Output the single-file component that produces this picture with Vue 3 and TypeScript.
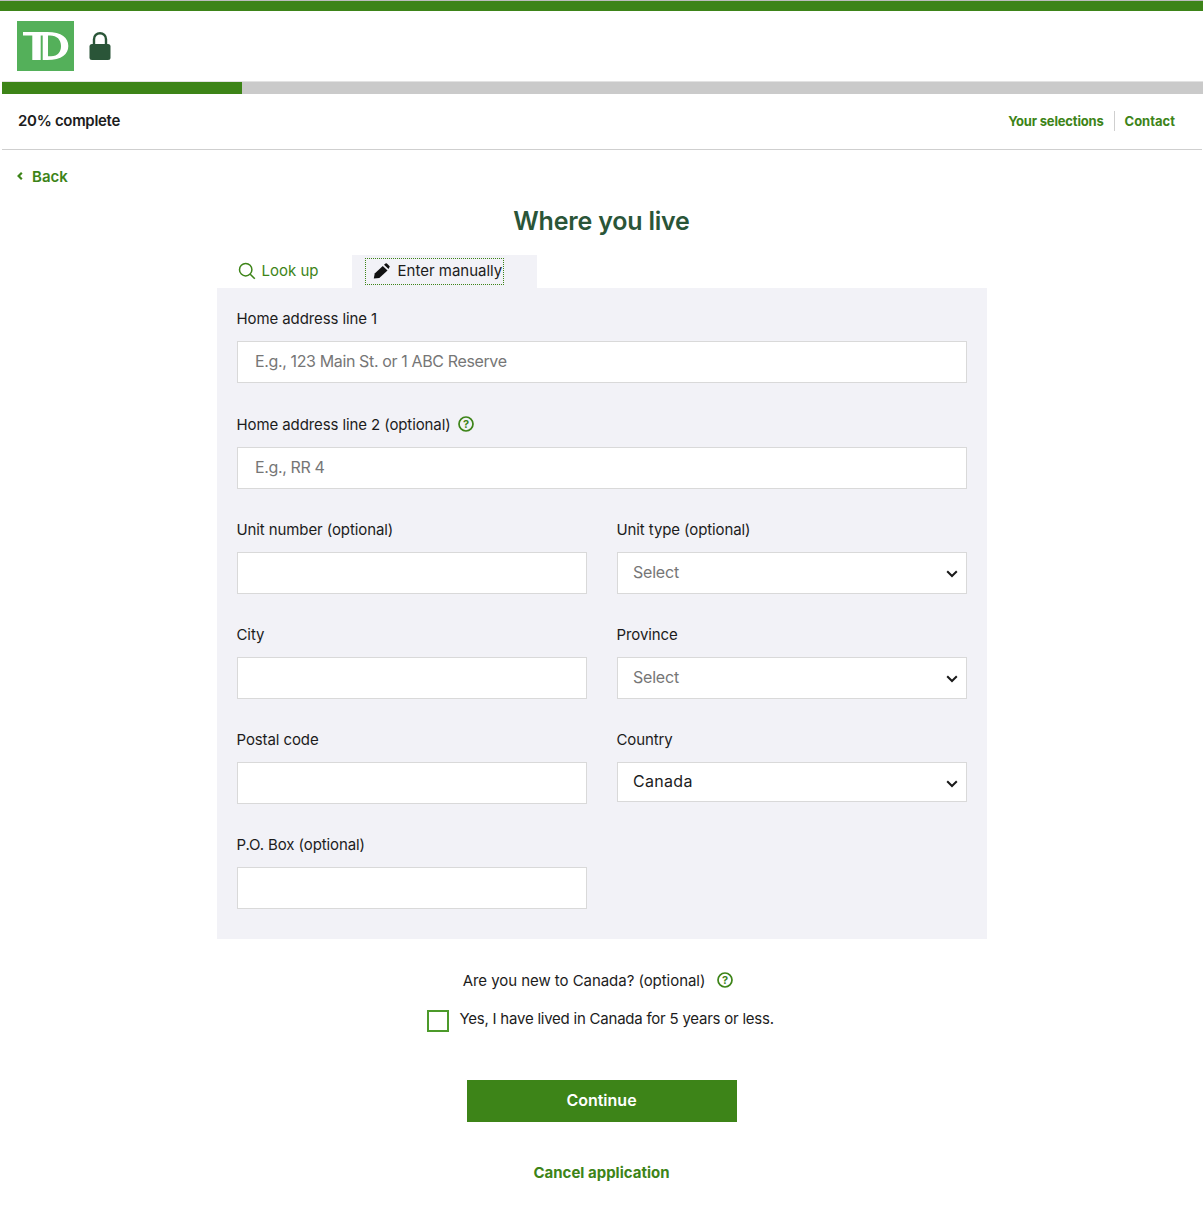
<script setup lang="ts">
const sideOptions = ['Select']
</script>

<template>
  <div class="page">
    <div class="top-bar"></div>
    <header class="brand">
      <svg class="logo" viewBox="0 0 57 50" width="57" height="50">
        <rect width="57" height="50" fill="#54b05a" />
        <path
          fill="#fff"
          fill-rule="evenodd"
          d="M6 11H30C45 11 51.300 17 51.300 25C51.300 33 45 39 30 39H25.700V14.400H23.700V39H15.300V14.400H6ZM31 14.400V35.200H34C41 35.200 44 31 44 25C44 18.500 40 14.400 33 14.400Z"
        />
      </svg>
      <svg class="lock" viewBox="0 0 22 28" width="22" height="28">
        <path d="M5 13V7.200a6 6 0 0 1 12 0V13" fill="none" stroke="#2a5538" stroke-width="2.400" />
        <rect x="0.500" y="12" width="21" height="16" rx="2.500" fill="#2a5538" />
      </svg>
    </header>

    <div class="progress">
      <div class="progress-fill"></div>
    </div>

    <div class="status">
      <span class="complete">20% complete</span>
      <nav class="links">
        <a class="link-sel">Your selections</a>
        <a class="link-contact">Contact</a>
      </nav>
    </div>

    <a class="back">
      <svg viewBox="0 0 6 8" width="6" height="8">
        <path d="M4.800 .8 1.600 4l3.200 3.200" fill="none" stroke="#3d8418" stroke-width="2.200" />
      </svg>
      Back
    </a>

    <h1 class="title">Where you live</h1>

    <main class="content">
      <div class="tabs">
        <div class="tab">
          <svg viewBox="0 0 18 18" width="18" height="18">
            <circle cx="7.700" cy="7.700" r="6.200" fill="none" stroke="#3d8418" stroke-width="1.500" />
            <path d="m12.200 12.200 4.600 4.600" stroke="#3d8418" stroke-width="1.600" />
          </svg>
          Look up
        </div>
        <div class="tab active">
          <div class="tab-focus">
            <svg viewBox="0 0 17 16" width="17" height="16">
              <path d="M0.800 15.500 1.700 10.600 9.800 3l4.700 4.500-8.200 7.400z" fill="#111" />
              <path d="m11 1.800 1.500-1.300a1 1 0 0 1 1.400 0l2.500 2.400a1 1 0 0 1 0 1.400L15.500 6z" fill="#111" />
            </svg>
            Enter manually
          </div>
        </div>
      </div>

      <form class="panel" @submit.prevent>
        <div class="field first">
          <label>Home address line 1</label>
          <input class="wide" type="text" placeholder="E.g., 123 Main St. or 1 ABC Reserve" />
        </div>
        <div class="field">
          <label>Home address line 2 (optional)
            <svg class="help" viewBox="0 0 16 16" width="16" height="16">
              <circle cx="8" cy="8" r="7" fill="none" stroke="#3d8418" stroke-width="1.700" />
              <text x="8" y="12" text-anchor="middle" class="help-mark">?</text>
            </svg>
          </label>
          <input class="wide" type="text" placeholder="E.g., RR 4" />
        </div>

        <div class="row">
          <div class="field">
            <label>Unit number (optional)</label>
            <input type="text" />
          </div>
          <div class="field">
            <label>Unit type (optional)</label>
            <div class="select-wrap">
              <select class="empty">
                <option v-for="o in sideOptions" :key="o">{{ o }}</option>
              </select>
              <svg class="chevron" viewBox="0 0 12 8" width="12" height="8">
                <path d="M1.200 1.200 6 6l4.800-4.800" fill="none" stroke="#1a1a1a" stroke-width="2" />
              </svg>
            </div>
          </div>
        </div>

        <div class="row">
          <div class="field">
            <label>City</label>
            <input type="text" />
          </div>
          <div class="field">
            <label>Province</label>
            <div class="select-wrap">
              <select class="empty">
                <option v-for="o in sideOptions" :key="o">{{ o }}</option>
              </select>
              <svg class="chevron" viewBox="0 0 12 8" width="12" height="8">
                <path d="M1.200 1.200 6 6l4.800-4.800" fill="none" stroke="#1a1a1a" stroke-width="2" />
              </svg>
            </div>
          </div>
        </div>

        <div class="row">
          <div class="field">
            <label>Postal code</label>
            <input type="text" />
          </div>
          <div class="field">
            <label>Country</label>
            <div class="select-wrap">
              <select class="short">
                <option>Canada</option>
              </select>
              <svg class="chevron" viewBox="0 0 12 8" width="12" height="8">
                <path d="M1.200 1.200 6 6l4.800-4.800" fill="none" stroke="#1a1a1a" stroke-width="2" />
              </svg>
            </div>
          </div>
        </div>

        <div class="row">
          <div class="field">
            <label>P.O. Box (optional)</label>
            <input type="text" />
          </div>
        </div>
      </form>

      <div class="question">
        Are you new to Canada? (optional)
        <svg class="help" viewBox="0 0 16 16" width="16" height="16">
          <circle cx="8" cy="8" r="7" fill="none" stroke="#3d8418" stroke-width="1.700" />
          <text x="8" y="12" text-anchor="middle" class="help-mark">?</text>
        </svg>
      </div>
      <div class="check-row">
        <span class="check"></span>
        <span class="check-text">Yes, I have lived in Canada for 5 years or less.</span>
      </div>

      <button class="continue" type="button">Continue</button>
      <a class="cancel">Cancel application</a>
    </main>
  </div>
</template>

<style scoped>
.page {
  height: 1210px;
  overflow: hidden;
  background: #fff;
  color: #1c1c1c;
  font-family: Inter, "Liberation Sans", sans-serif;
  font-size: 15px;
}
.top-bar {
  height: 10px;
  border-top: 1px solid #bdbdbd;
  background: #3d8418;
}
.brand {
  display: flex;
  align-items: center;
  gap: 15px;
  height: 50px;
  padding: 10px 0 11px 17px;
}
.logo {
  display: block;
}
.lock {
  display: block;
}
.progress {
  height: 12px;
  margin-left: 2px;
  background: #cacaca;
  box-shadow: 0 -1px 0 #e2e2e2;
}
.progress-fill {
  width: 240px;
  height: 100%;
  background: #3d8418;
}
.status {
  display: flex;
  align-items: center;
  justify-content: space-between;
  height: 56px;
  box-sizing: border-box;
  margin: 0 1px 0 2px;
  padding: 0 27px 1px 16px;
  border-bottom: 1px solid #cfcfcf;
}
.complete {
  font-size: 15px;
  font-weight: 600;
  letter-spacing: -0.3px;
  margin-top: -2px;
}
.links {
  display: flex;
  align-items: center;
  font-size: 13px;
  font-weight: 700;
  color: #3d8418;
}
.link-sel {
  padding-right: 10px;
  line-height: 20px;
  letter-spacing: -0.18px;
  border-right: 1px solid #cfcfcf;
}
.link-contact {
  padding-left: 10px;
}
.back {
  display: flex;
  align-items: center;
  gap: 9px;
  height: 20px;
  margin-top: 16px;
  padding-left: 17px;
  font-size: 15px;
  font-weight: 600;
  color: #3d8418;
}
.back svg {
  margin-top: -1px;
}
.title {
  margin: 20px 0 0;
  font-size: 25px;
  line-height: 30px;
  font-weight: 600;
  letter-spacing: -0.2px;
  text-align: center;
  color: #2a5538;
}
.content {
  width: 770px;
  margin: 19px auto 0;
}
.tabs {
  display: flex;
  height: 33px;
}
.tab {
  display: flex;
  align-items: center;
  gap: 6px;
  width: 135px;
  box-sizing: border-box;
  padding: 0 0 2px 21px;
  color: #3d8418;
}
.tab.active {
  width: 185px;
  padding: 0 0 0 13px;
  background: #f2f2f7;
  color: #1c1c1c;
}
.tab-focus {
  display: flex;
  align-items: center;
  gap: 8px;
  width: 139px;
  height: 27px;
  padding: 0 0 2px 8px;
  box-sizing: border-box;
  outline: 1px dotted #3d8418;
  outline-offset: -1px;
}
.panel {
  display: flex;
  flex-direction: column;
  gap: 30px;
  height: 651px;
  box-sizing: border-box;
  padding: 20px 20px 0;
  background: #f2f2f7;
}
.field {
  display: flex;
  flex-direction: column;
  gap: 13px;
}
.field.first {
  margin-bottom: 1px;
}
.field label {
  display: flex;
  align-items: center;
  gap: 7px;
  height: 20px;
  letter-spacing: -0.1px;
}
.row {
  display: grid;
  grid-template-columns: 350px 350px;
  gap: 30px;
}
input,
select {
  width: 100%;
  height: 42px;
  box-sizing: border-box;
  border: 1px solid #d9d9d9;
  border-radius: 0;
  background: #fff;
  font: inherit;
  font-size: 16px;
  color: #1c1c1c;
  outline: none;
}
input {
  padding: 0 17px 2px 17.5px;
}
input::placeholder {
  color: #767676;
  opacity: 1;
  letter-spacing: -0.37px;
}
select {
  appearance: none;
  padding: 0 30px 2px 15.5px;
}
select.empty {
  color: #767676;
  letter-spacing: -0.2px;
}
select.short {
  height: 40px;
  letter-spacing: 0.3px;
}
.select-wrap {
  position: relative;
}
.chevron {
  position: absolute;
  right: 9px;
  top: 18px;
  pointer-events: none;
}
.help {
  flex: none;
}
.help-mark {
  font-size: 11px;
  font-weight: 700;
  fill: #3d8418;
}
.question {
  display: flex;
  align-items: center;
  justify-content: center;
  gap: 12px;
  height: 20px;
  margin-top: 31px;
  padding-right: 7px;
  letter-spacing: -0.05px;
}
.check-row {
  display: flex;
  align-items: flex-start;
  gap: 11px;
  margin-top: 18px;
  padding-left: 210px;
  height: 24px;
}
.check {
  width: 22px;
  height: 22px;
  margin-top: 2px;
  box-sizing: border-box;
  border: 2px solid #4c9a2a;
}
.check-text {
  margin-top: 1px;
  line-height: 20px;
  letter-spacing: -0.23px;
}
.continue {
  display: block;
  width: 270px;
  height: 42px;
  margin: 48px auto 0;
  padding: 0 0 2px;
  border: 0;
  background: #3d8418;
  color: #fff;
  font: inherit;
  font-size: 16px;
  font-weight: 600;
}
.cancel {
  display: block;
  margin-top: 41px;
  text-align: center;
  line-height: 20px;
  font-weight: 700;
  color: #3d8418;
}
</style>
